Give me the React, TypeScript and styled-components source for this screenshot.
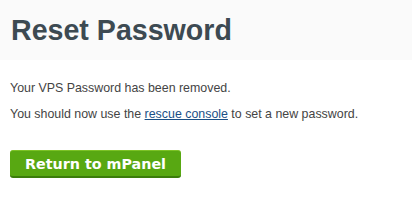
import React from "react";
import styled, { createGlobalStyle } from "styled-components";

const GlobalStyle = createGlobalStyle`
  body {
    margin: 0;
    background: #fff;
    font-family: "Liberation Sans", Arial, sans-serif;
  }
`;

const Header = styled.div`
  background: #fafafa;
  height: 60px;
  padding: 0 10px 0 11px;
  display: flex;
  align-items: center;
`;

const Title = styled.h1`
  margin: 0;
  font-size: 28.6px;
  font-weight: bold;
  color: #3d4a52;
`;

const Content = styled.div`
  padding: 22px 10px 0;
`;

const Text = styled.p`
  margin: 0 0 14px;
  font-size: 12.4px;
  line-height: 12px;
  color: #444;
`;

const Link = styled.a`
  color: #1a4f86;
  text-decoration: underline;
`;

const Button = styled.button`
  margin-top: 16px;
  width: 171px;
  height: 28px;
  border: none;
  border-top: 1px solid #7cc226;
  border-bottom: 2px solid #3b7d0a;
  border-radius: 3px;
  background: #58a812;
  color: #fff;
  font-family: "DejaVu Sans", Verdana, sans-serif;
  font-size: 14.3px;
  font-weight: bold;
  padding: 0;
  cursor: pointer;
`;

const App = () => {
  return (
    <>
      <GlobalStyle />
      <Header>
        <Title>Reset Password</Title>
      </Header>
      <Content>
        <Text>Your VPS Password has been removed.</Text>
        <Text>
          You should now use the <Link href="#">rescue console</Link> to set a new password.
        </Text>
        <Button>Return to mPanel</Button>
      </Content>
    </>
  );
};

export default App;
